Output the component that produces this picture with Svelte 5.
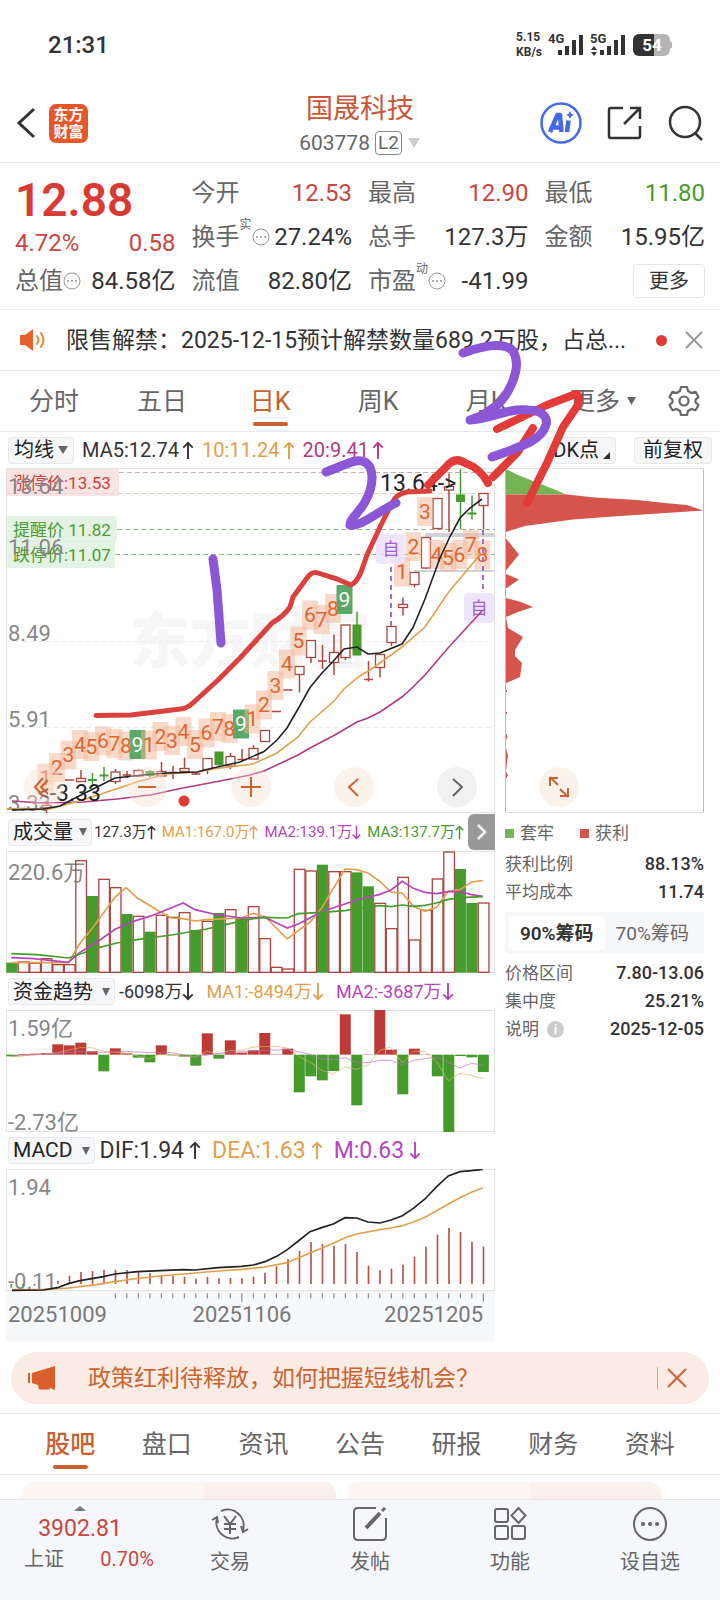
<script>
  const left = 6.3, pitch = 11.5;
  const cx = (i) => left + 5.7 + pitch * i;

  // [index, low wick, high wick, body top, body bottom, direction]
  const candles = [
    [0, 809, 809, 808.5, 809.5, 'g'], [1, 809, 809, 808.5, 809.5, 'd'], [2, 810, 810, 809.5, 810, 'd'],
    [3, 805, 813, 805.5, 808, 'r'], [5, 780, 780, 780, 780, 'd'], [6, 770, 781, 778.5, 781.5, 'r'],
    [7, 773, 787, 779.5, 780.5, 'g'], [8, 767, 781, 775, 776, 'g'], [9, 769, 784, 772, 781.5, 'r'],
    [10, 771, 778, 775, 775, 'd'], [11, 769, 777, 770.5, 776, 'r'], [12, 770, 777, 771.5, 775.5, 'g'],
    [13, 762, 776, 771.5, 776, 'r'], [14, 766, 779, 772.5, 772.5, 'd'], [15, 757.5, 771, 768.5, 771.5, 'r'],
    [16, 772, 775, 774, 774, 'd'], [17, 758, 774, 758.5, 769.5, 'r'], [18, 752, 767, 752, 764.5, 'g'],
    [19, 753, 769, 756.5, 766, 'r'], [20, 749, 762, 759.5, 759.5, 'd'], [21, 745, 759, 748.5, 759, 'r'],
    [22, 731, 741, 730.5, 741.5, 'r'], [23, 711, 711, 711.5, 711.5, 'd'], [24, 690, 690, 690, 690, 'd'],
    [25, 666, 692.5, 666.5, 674.5, 'r'], [26, 640, 663, 640.5, 657.5, 'r'], [27, 645, 669, 661, 661, 'd'],
    [28, 634.5, 675, 652.5, 662.5, 'r'], [29, 625, 660, 625, 657.5, 'r'], [30, 611.5, 655, 625, 655, 'g'],
    [31, 661, 681.5, 679.5, 679.5, 'd'], [32, 654, 677.5, 654.5, 667.5, 'r'], [33, 626, 646, 626.5, 642.5, 'r'],
    [34, 597.5, 615.5, 604.5, 607.5, 'r'], [35, 572, 587.5, 572.5, 584.5, 'r'], [36, 537, 569, 537.5, 568, 'r'],
    [37, 498, 529, 498.5, 528.5, 'r'], [38, 473.5, 532, 486.5, 490, 'r'], [39, 469, 529, 495, 501.5, 'g'],
    [40, 495.5, 519.5, 513, 514, 'g'], [41, 493, 529.5, 493.5, 505.5, 'r']
  ];

  const tags = [
    [1, 45.5, 778], [2, 57, 767.5], [3, 68.5, 755], [4, 80, 744.5], [5, 91.5, 746.5], [6, 103, 741], [7, 114.5, 743.5],
    [8, 126, 746], [9, 137.5, 744.5], [1, 149, 745], [2, 160.5, 736.5], [3, 172, 740.5], [4, 183.5, 731.5],
    [5, 195, 744.5], [6, 206.5, 733], [7, 218, 726.5], [8, 229.5, 728.5], [9, 241, 724], [1, 252.5, 719],
    [2, 264, 705], [3, 275.5, 685.5], [4, 287, 664], [5, 298.5, 641], [6, 310, 615], [7, 321.5, 619.5],
    [8, 333, 608.5], [9, 344.5, 599.5], [1, 402, 572], [2, 413.5, 546.5], [3, 425, 511.5], [4, 436.5, 554.5],
    [5, 448, 557.5], [6, 459.5, 554.5], [7, 471, 544.5], [8, 482.5, 555]
  ];

  // tops of the volume bars, three units to a pixel, base line at 485
  const volume = [456, 452, 456, 442, 460, 460, 148, 256, 204, 229, 310, 315, 363, 312, 318, 304, 358, 330, 307, 295, 322,
    286, 382, 468, 473, 174, 179, 162, 181, 181, 185, 227, 276, 352, 198, 386, 297, 203, 122, 175, 277, 275];
  const falling = new Set([0, 7, 10, 12, 16, 18, 20, 27, 30, 31, 39, 40]);

  // ends of the fund bars, three units to a pixel, zero line at 253
  const funds = [258, 251, 250, 248, 222, 225, 217, 243, 303, 234, 249, 262, 276, 225, 255, 259, 286, 189, 265, 210, 247,
    240, 188, 252, 235, 366, 318, 330, 302, 132, 405, 252, 118, 238, 372, 235, 252, 318, 486, 257, 261, 305];

  const macd = [450, 435, 424, 421, 418, 417, 418, 424, 428, 433, 435, 438, 444, 439, 443, 442, 443, 438, 426, 407, 385,
    361, 334, 340, 346, 340, 364, 405, 419, 414, 402, 378, 348, 312, 292, 304, 333, 348];

  const periods = ['分时', '五日', '日K', '周K', '月K'];
  const topics = ['股吧', '盘口', '资讯', '公告', '研报', '财务', '资料'];
</script>

{#snippet arrow(down)}
  <svg class="arrow" class:down viewBox="0 0 12 20"><path d="M6 19V2M1 7l5-5 5 5" /></svg>
{/snippet}
{#snippet dots()}
  <svg class="dots" viewBox="0 0 18 18"><circle cx="9" cy="9" r="8" /><path d="M5 9h.1M9 9h.1M13 9h.1" /></svg>
{/snippet}

<div class="page">
  <div class="status">
    <time>21:31</time>
    <div class="signals">
      <span class="net">5.15<br />KB/s</span>
      <svg width="38" height="26" viewBox="0 0 38 26">
        <text x="0" y="11">4G</text>
        <path d="M12 18v5M19 14v9M26 8v15M33 3v20" />
      </svg>
      <svg width="38" height="26" viewBox="0 0 38 26">
        <text x="0" y="11">5G</text>
        <path d="M12 18v5M19 14v9M26 8v15M33 3v20" />
        <path class="tri" d="M1 18l3-4 3 4zM1 20l3 4 3-4z" />
      </svg>
      <svg width="42" height="24" viewBox="0 0 42 24">
        <path class="cell" d="M8 1h24a6 6 0 0 1 6 6v1.500l2 1v5l-2 1V17a6 6 0 0 1-6 6H8z" />
        <path class="full" d="M22 1H7a6 6 0 0 0-6 6v10a6 6 0 0 0 6 6h15z" />
        <text class="pct" x="20" y="18" text-anchor="middle">54</text>
      </svg>
    </div>
  </div>

  <header>
    <div class="side">
      <button class="plain" aria-label="返回"><svg width="20" height="32" viewBox="0 0 20 32"><path d="M18 2L3 16l15 14" fill="none" stroke="#333" stroke-width="3" /></svg></button>
      <span class="logo">东方<br />财富</span>
    </div>
    <div class="title">
      <h1>国晟科技</h1>
      <p>603778<span class="l2">L2</span><svg width="14" height="10" viewBox="0 0 14 10"><path d="M1 0h12L7 10z" fill="#ccc" /></svg></p>
    </div>
    <div class="side right">
      <button class="plain" aria-label="Ai">
        <svg width="42" height="42" viewBox="0 0 42 42">
          <circle cx="21" cy="21" r="19.500" fill="#fff" stroke="#4468ea" stroke-width="2.500" />
          <g fill="none" stroke="#4468ea" stroke-width="4.500" stroke-linejoin="round">
            <path d="M10 30l7.500-17h2.500l1.500 17M14 25.500h7" /><path d="M28.500 18.500l-1.500 11.500" />
          </g>
          <path d="M30 9l1.300 2.700L34 13l-2.700 1.300L30 17l-1.300-2.700L26 13l2.700-1.300z" fill="#4468ea" />
        </svg>
      </button>
      <button class="plain" aria-label="分享">
        <svg width="36" height="36" viewBox="0 0 36 36" fill="none" stroke="#333" stroke-width="2.500">
          <path d="M16 3H4q-2 0-2 2v26q0 2 2 2h27q2 0 2-2V21M23 3h10v11M33 3L17 19" />
        </svg>
      </button>
      <button class="plain" aria-label="搜索">
        <svg width="36" height="36" viewBox="0 0 36 36" fill="none" stroke="#333" stroke-width="2.500">
          <circle cx="17" cy="17" r="15" /><path d="M27 28l7 7" />
        </svg>
      </button>
    </div>
  </header>

  <section class="quote">
    <div class="col first">
      <strong>12.88</strong>
      <div class="pair red"><span>4.72%</span><span>0.58</span></div>
      <div class="pair"><span class="k">总值{@render dots()}</span><span>84.58亿</span></div>
    </div>
    <div class="col">
      <div class="pair"><span class="k">今开</span><span class="red">12.53</span></div>
      <div class="pair"><span class="k">换手<sup>实</sup>{@render dots()}</span><span>27.24%</span></div>
      <div class="pair"><span class="k">流值</span><span>82.80亿</span></div>
    </div>
    <div class="col">
      <div class="pair"><span class="k">最高</span><span class="red">12.90</span></div>
      <div class="pair"><span class="k">总手</span><span>127.3万</span></div>
      <div class="pair"><span class="k">市盈<sup>动</sup>{@render dots()}</span><span>-41.99</span></div>
    </div>
    <div class="col">
      <div class="pair"><span class="k">最低</span><span class="green">11.80</span></div>
      <div class="pair"><span class="k">金额</span><span>15.95亿</span></div>
      <div class="pair end"><button class="more">更多</button></div>
    </div>
  </section>

  <section class="notice">
    <svg width="28" height="24" viewBox="0 0 28 24">
      <path d="M1 7h5l8-6v22l-8-6H1z" fill="#e8632b" />
      <path d="M18 8q3 4 0 8M22 5q5 7 0 14" fill="none" stroke="#e8863b" stroke-width="2" stroke-linecap="round" />
    </svg>
    <p>限售解禁：2025-12-15预计解禁数量689.2万股，占总...</p>
    <i></i>
    <button class="plain" aria-label="关闭"><svg width="18" height="18" viewBox="0 0 18 18"><path d="M1 1l16 16M17 1L1 17" stroke="#999" stroke-width="2" /></svg></button>
  </section>

  <nav class="periods">
    {#each periods as p}
      <button class:on={p === '日K'}>{p}</button>
    {/each}
    <button>更多<svg width="9" height="8" viewBox="0 0 9 8"><path d="M0 0h9L4.500 8z" fill="#666" /></svg></button>
    <button class="gear" aria-label="设置">
      <svg width="32" height="32" viewBox="0 0 32 32" fill="none" stroke="#666" stroke-width="2.200" stroke-linejoin="round">
        <path d="M13 2h6l1 4 3.500 2 4-1.200 3 5.200-3 2.800v2.400l3 2.800-3 5.200-4-1.200L20 26l-1 4h-6l-1-4-3.500-2-4 1.200-3-5.200 3-2.800v-2.400l-3-2.800 3-5.200 4 1.200L12 6z" />
        <circle cx="16" cy="16" r="4.500" />
      </svg>
    </button>
  </nav>

  <div class="averages">
    <button class="chip">均线<b></b></button>
    <span>MA5:12.74{@render arrow(false)}</span>
    <span class="orange">10:11.24{@render arrow(false)}</span>
    <span class="magenta">20:9.41{@render arrow(false)}</span>
    <div class="grow"></div>
    <button class="chip">DK点<b class="corner"></b></button>
    <button class="chip">前复权</button>
  </div>

  <main>
    <div class="charts">
      <div class="plot">
        <svg viewBox="6 468 489 345">
          <text class="mark" x="130" y="663">东方财富</text>
          <rect class="frame" x="6.500" y="468.500" width="488" height="344" />
          <g fill="none" stroke-dasharray="5 3">
            <path d="M6 641.500h489M6 727.500h489" stroke="#ececec" />
            <path d="M119 472.500h376" stroke="#cfa9ab" /><path d="M6 493.500h489" stroke="#dcd3c2" />
            <path d="M117 529.500h378M115 554.500h380" stroke="#8fbf8b" />
          </g>
          <rect x="425" y="533" width="69" height="4" fill="#d3d3d6" />
          <rect x="414" y="570" width="80" height="2" fill="#d3d3d6" />
          <g class="limit">
            <rect x="6" y="469" width="113" height="27" rx="2" fill="#f8d4d4" /><text x="13" y="489" fill="#c8453f">涨停价:13.53</text>
            <rect x="6" y="516" width="111" height="26" rx="2" fill="#d6edd4" /><text x="13" y="536" fill="#4c9b36">提醒价 11.82</text>
            <rect x="6" y="541" width="109" height="27" rx="2" fill="#d6edd4" /><text x="13" y="561" fill="#4c9b36">跌停价:11.07</text>
          </g>
          <g class="axis">
            <text x="8" y="494">13.64</text><text x="8" y="555">11.06</text><text x="8" y="641">8.49</text>
            <text x="8" y="727">5.91</text><text x="8" y="811">3.33</text>
          </g>
          {#each candles as [i, hi, lo, top, bottom, kind]}
            {#if kind === 'r'}
              <path class="wick" d="M{cx(i)} {hi}V{top}M{cx(i)} {bottom}V{lo}" />
              <rect class="rise" x={cx(i) - 4.5} y={top} width="9" height={bottom - top} />
            {:else if kind === 'g'}
              <path class="wick g" d="M{cx(i)} {hi}V{lo}" />
              <rect x={cx(i) - 4.5} y={top - 0.5} width="9" height={bottom - top + 1} fill="#459c2c" />
            {:else}
              <path class="wick" d="M{cx(i)} {hi}V{lo}M{cx(i) - 4.5} {top}h9" />
            {/if}
          {/each}
          {#each tags as [n, x, y]}
            <rect x={x - 8} y={y - 14.5} width="16" height="29" rx="1" fill={n === 9 ? '#5aa967' : '#f3b595'} fill-opacity={n === 9 ? 1 : 0.5} />
          {/each}
          {#each tags as [n, x, y]}
            <text class="tag" x={x} y={y + 7} fill={n === 9 ? '#fff' : '#dd6630'}>{n}</text>
          {/each}
          <g class="own">
            <path d="M391 567v60M483 530v60" />
            <rect x="376" y="534" width="29" height="30" rx="4" /><rect x="464" y="593" width="30" height="30" rx="4" />
            <text x="391" y="555">自</text><text x="479" y="614">自</text>
          </g>
          <g class="lines">
            <polyline stroke="#b13a80" points="12,801 43,803 83,802 117,799 150,795 183,788 220,781 250,775 264,771 298,755 310,748 333,736 357,722 368,718 380,712 402,697 413,687 425,675 448,648 482,611" />
            <polyline stroke="#e0a04c" points="7,809 50,809 83,800 140,781 167,774 197,772 213,769 253,764 277,753 298,737 310,722 333,702 344,689 357,678 373,668 402,647 425,627 448,593 473,563 481,553" />
            <polyline stroke="#222" points="12,810 43,809 60,806 77,797 97,787 115,778 143,775 167,773 197,772 213,768 240,762 264,751.500 277,740 287,728 298,709 310,687.500 322,673 333,661.500 344,649 357,647 368,654 380,653 402,644 413,627.500 425,599 440,558 450,536.500 460,518 470,508 482,499" />
          </g>
          <text class="note" x="380" y="491">13.64-&gt;</text>
          <text class="note" x="38" y="801">&lt;-3.33</text>
          <circle cx="184" cy="801" r="5.500" fill="#dd3b34" />
        </svg>
        <div class="controls">
          <button aria-label="最早"><svg viewBox="0 0 40 40"><path d="M19 11l-8 9 8 9M24 13l-7 7 7 7" /></svg></button>
          <button aria-label="缩小"><svg viewBox="0 0 40 40"><path d="M11 20h18" /></svg></button>
          <button aria-label="放大"><svg viewBox="0 0 40 40"><path d="M10 20h20M20 10v20" /></svg></button>
          <button aria-label="向左"><svg viewBox="0 0 40 40"><path d="M24 12l-9 8 9 9" /></svg></button>
          <button class="grey" aria-label="向右"><svg viewBox="0 0 40 40"><path d="M16 12l9 8-9 9" /></svg></button>
        </div>
      </div>

      <div class="head narrow">
        <button class="chip">成交量<b></b></button>
        <span>127.3万{@render arrow(false)}</span>
        <span class="orange">MA1:167.0万{@render arrow(false)}</span>
        <span class="purple">MA2:139.1万{@render arrow(true)}</span>
        <span class="green">MA3:137.7万{@render arrow(false)}</span>
        <button class="next" aria-label="更多指标"><svg width="12" height="18" viewBox="0 0 12 18"><path d="M2 2l7 7-7 7" fill="none" stroke="#fff" stroke-width="2.500" /></svg></button>
      </div>
      <svg viewBox="0 0 489 122">
        <rect class="frame" x=".5" y=".5" width="488" height="121" />
        <text class="axis" x="2" y="29">220.6万</text>
        <g transform="scale(.33333) translate(-18 -121)">
          {#each volume as top, i}
            {#if falling.has(i)}
              <rect x={18.9 + i * 34.5} y={top} width="33.500" height={486 - top} fill="#459c2c" />
            {:else}
              <rect class="hollow" x={20.400 + i * 34.5} y={top + 2} width="32" height={483 - top} />
            {/if}
          {/each}
          <polyline class="l" stroke="#e0a04c" points="34,456 205,456 240,398 275,355 345,260 378,231 412,262 480,303 515,322 550,324 585,331 620,327 690,323 725,321 760,308 795,318 862,385 895,360 930,335 965,292 1035,175 1070,177 1104,187 1140,212 1173,244 1207,248 1240,287 1275,302 1310,290 1345,242 1380,237 1414,214 1448,210" />
          <polyline class="l" stroke="#b844bd" points="34,441 100,444 205,455 240,425 300,388 345,356 400,332 455,315 550,277 585,297 640,310 725,322 795,320 862,352 895,340 965,303 1070,268 1140,251 1173,238 1207,212 1240,233 1275,245 1310,249 1345,243 1380,243 1414,252 1448,257" />
          <polyline class="l" stroke="#459c2c" points="34,429 110,432 205,442 300,410 350,397 430,384 515,373 620,355 690,339 760,324 795,320 862,322 895,309 965,305 1035,300 1070,293 1140,285 1173,288 1207,283 1240,287 1275,284 1310,277 1345,266 1380,261 1448,258" />
        </g>
      </svg>

      <div class="head tight">
        <button class="chip">资金趋势<b></b></button>
        <span>-6098万{@render arrow(true)}</span>
        <span class="orange">MA1:-8494万{@render arrow(true)}</span>
        <span class="purple">MA2:-3687万{@render arrow(true)}</span>
      </div>
      <svg viewBox="0 0 489 122">
        <rect class="frame" x=".5" y=".5" width="488" height="121" />
        <text class="axis" x="2" y="26">1.59亿</text>
        <text class="axis" x="2" y="120">-2.73亿</text>
        <g transform="scale(.33333) translate(-18 -119)">
          {#each funds as end, i}
            <rect x={18.9 + i * 34.5} y={Math.min(end, 253)} width="33" height={Math.abs(253 - end)} fill={end > 253 ? '#459c2c' : '#bd3b35'} />
          {/each}
          <polyline class="thin" stroke="#d8b266" points="34,260 172,247 240,232 275,232 310,243 378,248 447,266 480,252 585,260 620,243 655,252 690,240 725,240 760,230 830,228 862,233 895,258 930,275 965,300 1000,310 1035,290 1070,297 1104,284 1140,240 1170,230 1207,278 1240,243 1275,243 1310,275 1345,331 1380,309 1414,315 1448,325" />
          <polyline class="thin" stroke="#bb6cc0" points="34,257 172,250 240,243 310,246 378,243 447,247 515,247 585,260 655,249 760,242 862,237 930,252 965,266 1000,268 1035,262 1070,277 1104,277 1140,270 1173,270 1207,284 1240,270 1310,260 1345,277 1380,293 1414,279 1448,284" />
        </g>
      </svg>

      <div class="head wide">
        <button class="chip">MACD<b></b></button>
        <span>DIF:1.94{@render arrow(false)}</span>
        <span class="orange">DEA:1.63{@render arrow(false)}</span>
        <span class="purple">M:0.63{@render arrow(true)}</span>
      </div>
      <svg viewBox="0 0 489 172">
        <rect x="0" y="122" width="489" height="50" fill="#f7f8fa" />
        <rect class="frame" x=".5" y=".5" width="488" height="121" />
        <text class="axis" x="2" y="26">1.94</text>
        <text class="axis" x="2" y="120">-0.11</text>
        <g transform="scale(.33333) translate(-18 -115)">
          <path d="M34 460v11M69 460v7M104 460v5" stroke="#459c2c" stroke-width="5" />
          {#each macd as top, i}
            <path d="M{174 + i * 34.5} {top}V460" stroke="#b5524b" stroke-width="5" />
          {/each}
          <polyline class="bold" stroke="#e0a04c" points="36,477 130,477 205,472 290,462 345,453 400,445 480,436 585,427 655,421 725,416 795,409 862,396 930,367 1000,338 1035,321 1070,310 1140,297 1173,292 1207,285 1240,274 1275,260 1310,240 1345,220 1380,201 1414,185 1448,171" />
          <polyline class="bold" stroke="#222" points="36,479 130,478 172,471 205,459 240,450 310,438 345,430 412,423 550,417 585,418 655,411 725,407 760,403 795,393 830,377 862,357 895,331 930,303 965,291 1000,280 1035,261 1070,262 1104,274 1140,277 1173,268 1207,255 1240,233 1275,205 1310,168 1345,136 1380,123 1414,120 1448,116" />
          {#each Array(33) as _, k}
            <path d="M{346 + k * 34.5} 488v{k === 11 || k === 32 ? 25 : 15}" stroke="#777" stroke-width="3" />
          {/each}
        </g>
        <g class="axis dates">
          <text x="2" y="153">20251009</text><text x="236" y="153" text-anchor="middle">20251106</text><text x="477" y="153" text-anchor="end">20251205</text>
        </g>
      </svg>
    </div>

    <aside>
      <div class="plot">
        <svg viewBox="505 468 199 345">
          <path d="M505.500 468v345M703.500 468v345" stroke="#bbb" /><path d="M505 468.500h199M505 812.500h199" stroke="#ddd" />
          <path d="M506 469l12 6 20 8 18 7 10 4.500h-60z" fill="#74b455" />
          <path d="M506 494.500h61l28 3 42 2.500 28 3 22 2 16 5.500-22 1.500-38 2.500-30 2-40 3-26 3.500-22 3-19 6zM506 538.500l13 16-13 16zM506 574l13 5.500-13 9zM506 598l15 4 12 5-15 5-12 5zM506 617l2 11 15 9-8 13v6l7 7-2 14-14 6zM506 690h1v2h-1zM506 712h1v2h-1zM506 733l1.500 4-1.500 3zM506 748l2 8-1 6-1 10 2 3-2 4z" fill="#d5544e" />
        </svg>
        <button class="expand" aria-label="展开"><svg viewBox="0 0 40 40"><path d="M19 18l-8-8M11 19v-8h8M21 22l8 8M29 21v8h-8" /></svg></button>
      </div>
      <div class="legend"><span><i></i>套牢</span><span><i class="win"></i>获利</span></div>
      <div class="row"><span>获利比例</span><b>88.13%</b></div>
      <div class="row"><span>平均成本</span><b>11.74</b></div>
      <div class="toggle"><button class="on">90%筹码</button><button>70%筹码</button></div>
      <div class="row"><span>价格区间</span><b>7.80-13.06</b></div>
      <div class="row"><span>集中度</span><b>25.21%</b></div>
      <div class="row"><span>说明<em>i</em></span><b>2025-12-05</b></div>
    </aside>
  </main>

  <div class="banner">
    <svg width="30" height="26" viewBox="0 0 30 26"><path d="M1 8h2v10H1zM5 8l23-7v24l-5-2-1 1.500H12L11 20l-6-2z" fill="#d95f2c" /></svg>
    <p>政策红利待释放，如何把握短线机会？</p>
    <button class="plain" aria-label="关闭"><svg width="20" height="20" viewBox="0 0 20 20"><path d="M1 1l18 18M19 1L1 19" stroke="#d2622f" stroke-width="2" /></svg></button>
  </div>

  <nav class="topics">
    {#each topics as t, i}
      <button class:on={i === 0}>{t}</button>
    {/each}
  </nav>

  <div class="cards"><div></div><div></div></div>

  <footer>
    <div class="index">
      <svg width="12" height="5" viewBox="0 0 12 5"><path d="M0 5l6-5 6 5z" fill="#777" /></svg>
      <span class="red">3902.81</span>
      <p><span>上证</span><span class="red">0.70%</span></p>
    </div>
    <button>
      <svg viewBox="0 0 38 36">
        <path d="M10 5a16 16 0 0 1 22 19M28 31A16 16 0 0 1 6 12M1 14l5-3 1 6M37 23l-5 3-2-6" />
        <path d="M13 10l6 8 6-8M19 18v10M13 18h12M13 23h12" />
      </svg>交易
    </button>
    <button>
      <svg viewBox="0 0 38 36"><path d="M25 2H7q-4 0-4 4v24q0 4 4 4h24q4 0 4-4V12" /><path d="M15 22L29 7" stroke-width="4" /><path d="M31 5l3-3" stroke-width="3" /></svg>发帖
    </button>
    <button>
      <svg viewBox="0 0 38 36"><rect x="4" y="3" width="13" height="13" rx="2" /><rect x="4" y="20" width="13" height="13" rx="2" /><rect x="21" y="20" width="13" height="13" rx="2" /><path d="M27.500 2l7 7.500-7 7.500-7-7.500z" /></svg>功能
    </button>
    <button>
      <svg viewBox="0 0 38 36"><circle cx="19" cy="18" r="16" /><path d="M12 18h.1M19 18h.1M26 18h.1" stroke-width="4" stroke-linecap="round" /></svg>设自选
    </button>
  </footer>

  <svg class="ink" viewBox="0 0 720 1600">
    <g fill="none" stroke-linecap="round" stroke-linejoin="round">
      <path stroke="#da403e" stroke-width="5" d="M96 715.500L131 715 160 711.500 184 708.500Q190 706 194 702L218 680 240 658 272 623Q284 616 290 607L293 597 307 578Q312 571 318 573L337 579 351 585Q357 582 361 572L367 555 380 527 392 503Q396 494 407 492L430 491" />
      <path stroke="#e23b38" stroke-width="8" d="M428 485L446 467Q455 456 465 463 480 468 488 483M493 477L517 453 533 428M497 429L520 418 547 405 573 395Q581 392 578 405L563 427 547 463 527 503" />
      <path stroke="#8b57d6" stroke-width="9" d="M213 559L217 590 221 643M326 472C345 465 354 459 362 461 374 464 375 483 366 500 361 511 350 518 350 525 361 527 377 512 396 503M463 353C485 345 505 342 513 351 524 369 505 402 493 408 482 417 473 419 470 420 490 420 505 408 528 410 543 410 548 418 546 425 541 441 522 446 492 457" />
    </g>
  </svg>
</div>

<style>
  :global(body) { margin: 0; background: #fff; }
  .page { position: relative; display: flex; flex-direction: column; min-height: 100vh; overflow: hidden; color: #333; font-family: Roboto, "Noto Sans CJK SC", sans-serif; font-size: 24px; line-height: 1; }
  button { font: inherit; color: inherit; background: none; border: 0; padding: 0; margin: 0; }
  svg { display: block; flex: none; }
  p, h1 { margin: 0; font-weight: 400; }
  .red { color: #c9463f; }
  .green { color: #459c2c; }
  .orange { color: #e0a04c; }
  .magenta { color: #b13a80; }
  .purple { color: #b844bd; }

  .status { display: flex; justify-content: space-between; align-items: center; height: 90px; padding: 0 46px 0 48px; }
  time { font-size: 24px; font-weight: 500; }
  .signals { display: flex; align-items: center; gap: 4px; }
  .net { font-size: 12px; line-height: 15px; font-weight: 700; margin-right: 2px; }
  .signals text { font-size: 13px; font-weight: 700; fill: #333; }
  .signals path { stroke: #333; stroke-width: 4; fill: none; }
  .signals .tri, .signals .full { fill: #333; stroke: none; }
  .signals .cell { fill: #b5b5b5; stroke: none; }
  .signals .pct { font-size: 17px; fill: #fff; }

  header { display: grid; grid-template-columns: 1fr auto 1fr; align-items: start; height: 72px; padding: 0 16px; border-bottom: 1px solid #e8e8e8; }
  .side { display: flex; align-items: center; gap: 13px; height: 66px; }
  .right { justify-content: flex-end; gap: 25px; }
  .logo { width: 39px; height: 39px; box-sizing: border-box; padding-top: 3px; border-radius: 7px; background: #e8562a; color: #fff; font-size: 15px; line-height: 17px; font-weight: 700; text-align: center; }
  .title { text-align: center; padding-top: 2px; }
  h1 { font-size: 27px; line-height: 35px; color: #c95535; }
  .title p { display: flex; align-items: center; justify-content: center; gap: 5px; height: 32px; font-size: 21px; color: #666; }
  .l2 { border: 1px solid #888; border-radius: 4px; font-size: 19px; line-height: 22px; padding: 0 2px; }

  .quote { display: grid; grid-template-columns: repeat(4, 1fr); gap: 16px; padding: 8px 15px; height: 130px; border-bottom: 1px solid #eee; }
  .pair { display: flex; justify-content: space-between; align-items: center; height: 44px; white-space: nowrap; }
  .k { display: flex; align-items: center; color: #666; }
  .first strong { display: block; height: 56px; line-height: 58px; font-size: 46px; font-weight: 600; color: #d93b34; }
  .first .pair.red { height: 32px; }
  sup { font-size: 12px; align-self: flex-start; margin-top: -6px; }
  .dots { width: 18px; height: 18px; fill: none; stroke: #999; stroke-width: 1; }
  .dots path { stroke-width: 2; stroke-linecap: round; }
  .end { justify-content: flex-end; }
  .more { width: 72px; height: 34px; border: 1px solid #e6e6e6; border-radius: 4px; font-size: 20px; }

  .notice { display: flex; align-items: center; height: 60px; padding: 0 17px 0 19px; border-bottom: 1px solid #e8e8e8; }
  .notice p { flex: 1; margin-left: 19px; font-size: 23px; white-space: nowrap; }
  .notice i { width: 11px; height: 11px; border-radius: 50%; background: #dd3b34; margin-right: 18px; }

  .periods { display: grid; grid-template-columns: repeat(5, 108fr) 126fr 36fr; height: 60px; padding-right: 18px; border-bottom: 1px solid #e8e8e8; color: #666; font-size: 25px; }
  .periods button { display: flex; align-items: center; justify-content: center; gap: 7px; height: 100%; position: relative; }
  .periods .on, .topics .on { color: #c9602f; }
  .periods .on::after, .topics .on::after { content: ""; position: absolute; left: 50%; bottom: 5px; width: 35px; height: 4px; margin-left: -17px; border-radius: 2px; background: #c9602f; }

  .averages, .head { display: flex; align-items: center; white-space: nowrap; }
  .averages { height: 36px; padding: 0 8px; font-size: 20px; gap: 8px; }
  .averages span, .head span { display: flex; align-items: center; gap: 3px; }
  .grow { flex: 1; }
  .chip { display: flex; align-items: center; gap: 4px; height: 27px; padding: 0 5px; border: 1px solid #e8e9ec; border-radius: 4px; background: #f6f7f9; font-size: 20px; color: #222; }
  .averages .chip:last-child { margin-left: 10px; padding: 0 8px; }
  .chip b { border: 5px solid transparent; border-top: 8px solid #666; border-bottom: 0; }
  .chip .corner { border: 0; border-bottom: 7px solid #333; border-left: 7px solid transparent; align-self: flex-end; margin-bottom: 4px; }
  .arrow { width: 12px; height: 19px; fill: none; stroke: currentColor; stroke-width: 2; }
  .down { transform: rotate(180deg); }

  main { display: grid; grid-template-columns: minmax(0, 489fr) minmax(0, 199fr); gap: 10px; padding: 0 16px 0 6px; align-items: start; }
  main svg { width: 100%; }
  main .arrow { width: 12px; }
  main .next svg { width: 12px; }
  .plot { position: relative; }
  .frame { fill: none; stroke: #e3e3e3; }
  .axis { font-size: 22px; fill: #888; }
  .dates { fill: #777; }
  .limit rect { fill-opacity: .65; }
  .limit text { font-size: 17px; }
  .mark { font-size: 60px; font-weight: 900; fill: #f6f6f7; }
  .wick { stroke: #ad4640; fill: none; stroke-width: 1.5; }
  .wick.g { stroke: #459c2c; }
  .rise { fill: #fff; stroke: #ad4640; stroke-width: 1.3; }
  .tag { font-size: 21px; text-anchor: middle; }
  .own path { stroke: #a06be0; stroke-width: 2; stroke-dasharray: 5 4; }
  .own rect { fill: #ece2fc; fill-opacity: .85; }
  .own text { font-size: 17px; fill: #9b5fd8; text-anchor: middle; }
  .lines { fill: none; stroke-width: 1.6; }
  .note { font-size: 23px; fill: #222; }
  .controls { position: absolute; left: 18px; right: 18px; bottom: 6px; display: flex; justify-content: space-between; }
  .controls button, .expand { width: 40px; height: 40px; border-radius: 50%; background: rgba(247, 222, 207, .4); }
  .controls .grey { background: rgba(238, 238, 238, .8); }
  .controls path, .expand path { fill: none; stroke: #cb6431; stroke-width: 2; }
  .controls .grey path { stroke: #666; }
  .expand { position: absolute; left: 34px; bottom: 6px; }

  .head { position: relative; height: 37px; padding-left: 2px; gap: 8px; font-size: 22px; }
  .head .chip { gap: 9px; padding: 0 4px; margin-right: -6px; }
  .head .chip b { border-width: 8px 4px 0; }
  .narrow { height: 38px; font-size: 15px; gap: 6px; }
  .narrow .arrow { width: 9px; }
  .narrow .chip { margin-right: -4px; gap: 6px; }
  .tight { font-size: 18px; gap: 12px; }
  .tight .chip { margin-right: -8px; }
  .wide { font-size: 23px; gap: 11px; }
  .wide .chip { font-size: 21px; }
  .narrow span, .tight span { gap: 0; }
  .wide span { gap: 5px; }
  .next { position: absolute; right: 0; width: 27px; height: 36px; border-radius: 6px 0 0 6px; background: #999; display: flex; align-items: center; justify-content: center; }
  .hollow { fill: #fff; fill-opacity: 0; stroke: #ad4640; stroke-width: 4; }
  .l { fill: none; stroke-width: 5; }
  .thin { fill: none; stroke-width: 2; }
  .bold { fill: none; stroke-width: 5; }

  aside { font-size: 17px; color: #666; }
  .legend { display: flex; gap: 26px; height: 34px; padding-top: 3px; align-items: center; }
  .legend span { display: flex; align-items: center; gap: 6px; }
  .legend i { width: 9px; height: 9px; background: #74b455; }
  .legend .win { background: #d5544e; }
  .row { display: flex; justify-content: space-between; align-items: center; height: 28px; }
  .row span { display: flex; align-items: center; gap: 8px; }
  .row b { font-size: 18px; font-weight: 500; color: #333; }
  .row em { width: 17px; height: 17px; border-radius: 50%; background: #ccc; color: #fff; font-style: normal; font-size: 13px; line-height: 17px; font-weight: 700; text-align: center; }
  .toggle { display: grid; grid-template-columns: 1fr 1fr; box-sizing: border-box; height: 42px; margin: 6px 0 5px; padding: 4px; border-radius: 3px; background: #f6f7f9; font-size: 19px; white-space: nowrap; }
  .toggle .on { background: #fff; border-radius: 3px; color: #333; font-weight: 600; }

  .banner { display: flex; align-items: center; height: 52px; margin: 11px 11px 9px; padding: 0 22px 0 16px; border-radius: 26px; background: #faece5; color: #cb6431; }
  .banner p { flex: 1; margin-left: 31px; font-size: 23px; }
  .banner button { padding-left: 9px; border-left: 1px solid #dfa88c; height: 22px; }

  .topics { display: grid; grid-template-columns: repeat(7, 1fr); height: 60px; padding: 0 22px; border-top: 1px solid #e6e6e6; border-bottom: 1px solid #e6e6e6; font-size: 25px; color: #666; }
  .topics button { position: relative; }
  .topics .on { font-weight: 500; }

  .cards { display: grid; grid-template-columns: 315fr 315fr; gap: 11px; height: 17px; padding: 7px 58px 0 21px; overflow: hidden; }
  .cards div { height: 40px; border-radius: 12px; background: linear-gradient(90deg, #fdf7f4 58%, #fbf0ee 58%); }

  footer { flex: 1; display: grid; grid-template-columns: 160fr 140fr 140fr 140fr 140fr; align-items: start; min-height: 99px; border-top: 1px solid #e4e5e8; background: #f6f7fa; color: #666; font-size: 20px; }
  footer button { display: flex; flex-direction: column; align-items: center; gap: 10px; padding-top: 6px; }
  footer button svg { width: 38px; height: 36px; fill: none; stroke: #666; stroke-width: 2; }
  .index { display: flex; flex-direction: column; align-items: center; padding-top: 6px; font-size: 23px; }
  .index > span { line-height: 36px; }
  .index p { display: flex; align-self: stretch; justify-content: space-between; padding: 0 6px 0 24px; font-size: 20px; line-height: 24px; }
  .ink { position: absolute; left: 0; top: 0; width: 100%; pointer-events: none; }
</style>
